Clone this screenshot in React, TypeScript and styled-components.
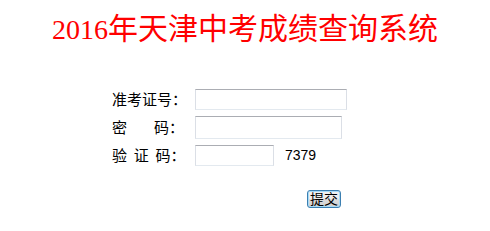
import styled, { createGlobalStyle } from "styled-components";

const GlobalStyle = createGlobalStyle`
  html, body {
    margin: 0;
    padding: 0;
    background: #ffffff;
  }
  body {
    font-family: "Noto Sans CJK SC", "DejaVu Sans", sans-serif;
    font-size: 14px;
    color: #000000;
  }
`;

const Page = styled.div`
  width: 490px;
  height: 231px;
  overflow: hidden;
`;

const Title = styled.h1`
  margin: 0;
  padding-top: 7px;
  height: 38px;
  text-align: center;
  font-family: "Noto Sans CJK SC", sans-serif;
  font-size: 30px;
  font-weight: 400;
  line-height: 38px;
  color: #ff0000;
  white-space: nowrap;
`;

const Year = styled.span`
  font-family: "Liberation Serif", serif;
  font-size: 28px;
`;

const Form = styled.form`
  margin: 40px 0 0 112px;
  display: grid;
  grid-template-columns: 83px auto;
  grid-auto-rows: 28px;
  align-items: center;
`;

const Label = styled.label`
  font-size: 15px;
  line-height: 16px;
  white-space: pre;
`;

const Field = styled.div`
  display: flex;
  align-items: center;
  gap: 10px;
`;

const TextInput = styled.input<{ $w: number; $h: number }>`
  box-sizing: border-box;
  width: ${p => p.$w}px;
  height: ${p => p.$h}px;
  margin: 0;
  padding: 1px 2px;
  border: 1px solid #dbdfe6;
  border-top-color: #abadb3;
  border-bottom-color: #e3e9ef;
  background: #ffffff;
  font-size: 13px;
  outline: none;
`;

const Code = styled.span`
  font-family: "Liberation Sans", Arial, sans-serif;
  font-size: 14px;
  color: #000000;
  padding-left: 1px;
`;

const ButtonRow = styled.div`
  grid-column: 2;
  padding: 30px 0 0 112px;
`;

const Submit = styled.button`
  box-sizing: border-box;
  width: 34px;
  height: 18px;
  padding: 0;
  border: 1px solid #3c7fb1;
  border-radius: 3px;
  box-shadow: inset 0 0 0 1px #a6dbf8;
  background: linear-gradient(#f2f2f2 0%, #ebebeb 50%, #dddddd 51%, #cfcfcf 100%);
  font-family: "Noto Sans CJK SC", sans-serif;
  font-size: 14px;
  line-height: 15px;
  color: #000000;
`;

export default function App() {
  return (
    <Page>
      <GlobalStyle />
      <Title>
        <Year>2016</Year>年天津中考成绩查询系统
      </Title>
      <Form onSubmit={e => e.preventDefault()}>
        <Label>准考证号：</Label>
        <Field>
          <TextInput type="text" $w={152} $h={21} />
        </Field>
        <Label>{"密        码："}</Label>
        <Field>
          <TextInput type="password" $w={147} $h={23} />
        </Field>
        <Label>{"验  证  码："}</Label>
        <Field>
          <TextInput type="text" $w={79} $h={21} />
          <Code>7379</Code>
        </Field>
        <ButtonRow>
          <Submit type="submit">提交</Submit>
        </ButtonRow>
      </Form>
    </Page>
  );
}
